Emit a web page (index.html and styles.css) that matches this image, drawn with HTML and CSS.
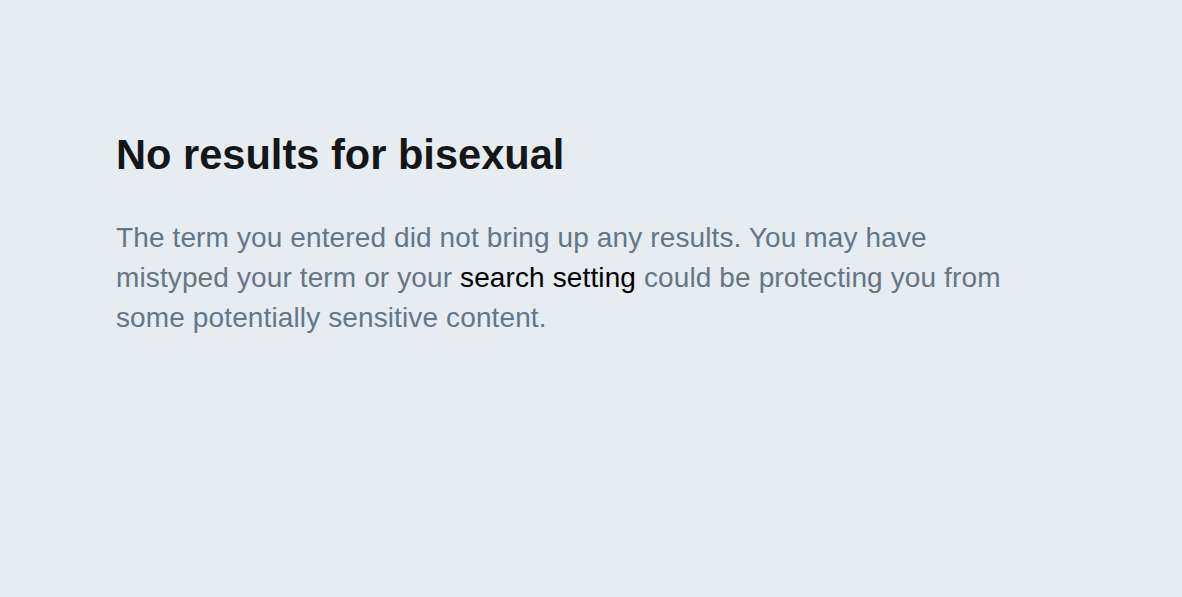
FILE: index.html
```html
<!DOCTYPE html>
<html lang="en">
<head>
    <meta charset="UTF-8">
    <meta name="viewport" content="width=device-width, initial-scale=1.0">
    <title>Search</title>
    <link rel="stylesheet" href="styles.css">
</head>
<body>
    <main class="empty-state">
        <h1>No results for bisexual</h1>
        <p>
            The term you entered did not bring up any results. You may have
            mistyped your term or your <a href="#">search setting</a> could be protecting you from
            some potentially sensitive content.
        </p>
    </main>
</body>
</html>
```

FILE: styles.css
```css
* {
    margin: 0;
    padding: 0;
    box-sizing: border-box;
}

body {
    min-height: 100vh;
    background: #e6ecf0;
    font-family: "Liberation Sans", Arial, sans-serif;
}

.empty-state {
    padding: 130px 116px 0 116px;
}

h1 {
    font-size: 41.6px;
    font-weight: 700;
    line-height: 50px;
    color: #14171a;
}

.empty-state p {
    max-width: 910px;
    margin-top: 38px;
    font-size: 28px;
    line-height: 40px;
    letter-spacing: 0.12px;
    color: #657786;
}

.empty-state a {
    color: #000;
    text-decoration: none;
}
```
